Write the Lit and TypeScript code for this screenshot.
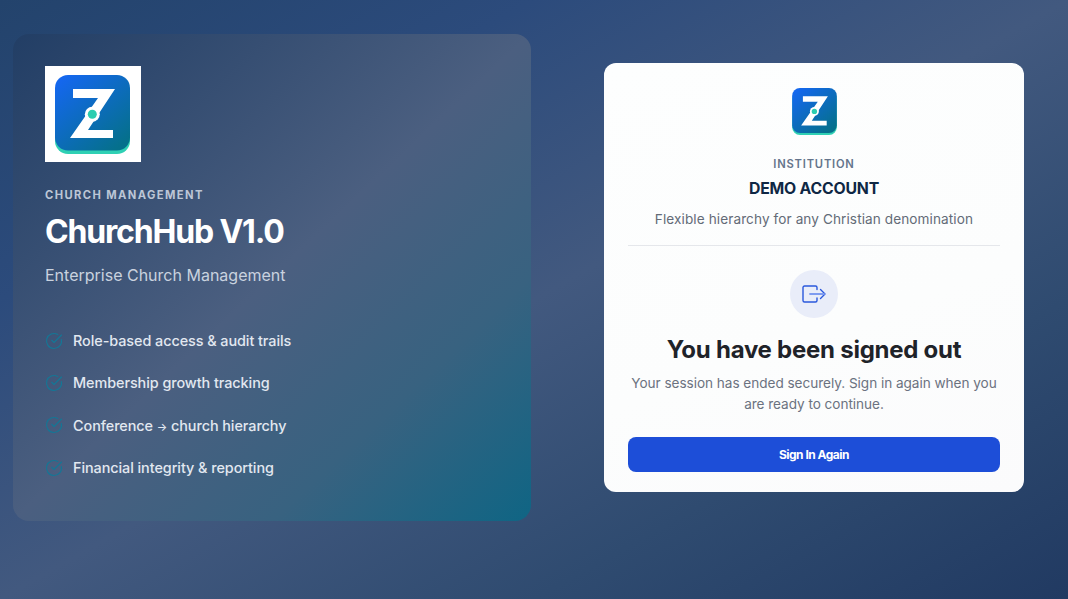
import { LitElement, html, css, svg } from "lit";
import { customElement } from "lit/decorators.js";

let uid = 0;
const logoArt = () => {
  const id = `lg${uid++}`;
  return svg`<defs>
      <linearGradient id=${id} x1="0.1" y1="0.05" x2="0.85" y2="0.95">
        <stop offset="0" stop-color="#1467ee" />
        <stop offset="1" stop-color="#05708c" />
      </linearGradient>
    </defs>
    <rect x="10" y="14" width="75" height="74" rx="13" fill="#2fd0b4" />
    <rect x="10" y="9" width="75" height="75.5" rx="13" fill=${`url(#${id})`} />
    <path d="M28 23H70L43 64H68V72H25L53 32H28Z" fill="#fff" />
    <circle cx="47.3" cy="48.3" r="7.5" fill="#fff" />
    <circle cx="47.3" cy="48.3" r="4.5" fill="#2bcdb0" />`;
};

const check = svg`<path d="M21.8 10A10 10 0 1 1 17 3.34" fill="none" stroke="currentColor" stroke-width="1.5" stroke-linecap="round"/><path d="M9 11l3 3L22 4" fill="none" stroke="currentColor" stroke-width="1.5" stroke-linecap="round" stroke-linejoin="round"/>`;

@customElement("app-root")
export class AppRoot extends LitElement {
  static styles = css`
    :host {
      display: block;
      height: 599px;
      overflow: hidden;
      font-family: "Inter", "Noto Sans", sans-serif;
      background: linear-gradient(to bottom right, #23436c 0%, #2c4b7c 25%, #42597f 50%, #2f4b70 75%, #213a62 100%);
    }
    .page {
      display: flex;
      align-items: flex-start;
      gap: 73px;
      padding: 34px 0 0 13px;
    }
    .panel {
      box-sizing: border-box;
      width: 518px;
      height: 487px;
      padding: 32px;
      border-radius: 16px;
      background: linear-gradient(to bottom right, #223e65 0%, #4b5f80 50%, #386280 75%, #0f6584 100%);
    }
    .logo-big {
      display: block;
      width: 96px;
      height: 96px;
      background: #fff;
    }
    .logo-big svg, .logo-small svg { display: block; filter: blur(0.4px); }
    .eyebrow {
      margin-top: 26px;
      font-size: 11.2px;
      line-height: 14px;
      font-weight: 700;
      letter-spacing: 1.4px;
      color: #bcc6d6;
    }
    h1 {
      margin: 10px 0 0;
      font-size: 32px;
      line-height: 40px;
      font-weight: 700;
      letter-spacing: -1.17px;
      color: #fff;
    }
    .sub {
      margin-top: 12px;
      font-size: 16px;
      line-height: 22px;
      color: #c9d2df;
    }
    ul {
      list-style: none;
      margin: 44px 0 0;
      padding: 0;
      display: flex;
      flex-direction: column;
      gap: 21px;
    }
    li {
      display: flex;
      align-items: center;
      gap: 10px;
      height: 21.3px;
      font-size: 14.4px;
      font-weight: 500;
      letter-spacing: -0.06px;
      color: #e2e8f0;
    }
    li svg {
      width: 18px;
      height: 18px;
      color: #147796;
      flex: none;
    }
    .arrow { font-size: 11px; }
    .card {
      box-sizing: border-box;
      margin-top: 29px;
      width: 420px;
      height: 429px;
      padding: 24px;
      border-radius: 12px;
      background: linear-gradient(160deg, #fdfefe 0%, #fcfdfd 60%, #fbfbfc 100%);
      display: flex;
      flex-direction: column;
      align-items: center;
      text-align: center;
    }
    .card > * { flex: none; }
    .logo-small {
      display: block;
      width: 45px;
      height: 47px;
      margin-top: 1px;
    }
    .inst {
      margin-top: 22px;
      font-size: 11.2px;
      line-height: 14px;
      font-weight: 600;
      letter-spacing: 0.8px;
      color: #64748b;
    }
    .org {
      margin-top: 7px;
      font-size: 15.8px;
      line-height: 22px;
      font-weight: 700;
      letter-spacing: -0.2px;
      color: #0f2744;
    }
    .tag {
      margin-top: 9px;
      font-size: 13.6px;
      line-height: 20px;
      letter-spacing: 0.09px;
      color: #636b77;
    }
    .rule {
      align-self: stretch;
      height: 1px;
      margin-top: 16px;
      background: #e5e7eb;
    }
    .badge {
      margin-top: 24px;
      width: 48px;
      height: 48px;
      border-radius: 50%;
      background: #e9edf9;
      display: flex;
      align-items: center;
      justify-content: center;
    }
    .badge svg { width: 24px; height: 24px; }
    h2 {
      margin: 17px 0 0;
      font-size: 24px;
      line-height: 30px;
      font-weight: 700;
      letter-spacing: -0.25px;
      color: #1f2329;
    }
    .msg {
      margin-top: 7.5px;
      font-size: 13.6px;
      line-height: 21px;
      letter-spacing: -0.04px;
      color: #6b7280;
      max-width: 372px;
    }
    .btn {
      align-self: stretch;
      margin-top: 22.5px;
      height: 35px;
      border: 0;
      border-radius: 8px;
      background: #1d4ed8;
      color: #fff;
      font-family: inherit;
      font-size: 12px;
      font-weight: 700;
      letter-spacing: -0.5px;
    }
  `;

  render() {
    const item = (content: unknown) =>
      html`<li><svg viewBox="0 0 24 24">${check}</svg><span>${content}</span></li>`;
    return html`<div class="page">
      <section class="panel">
        <div class="logo-big"><svg width="96" height="96" viewBox="0 0 96 96" aria-hidden="true">${logoArt()}</svg></div>
        <div class="eyebrow">CHURCH MANAGEMENT</div>
        <h1>ChurchHub V1.0</h1>
        <div class="sub">Enterprise Church Management</div>
        <ul>
          ${item("Role-based access & audit trails")}
          ${item("Membership growth tracking")}
          ${item(html`Conference <span class="arrow">→</span> church hierarchy`)}
          ${item("Financial integrity & reporting")}
        </ul>
      </section>
      <section class="card">
        <div class="logo-small"><svg width="45" height="47" viewBox="10 9 75 79" aria-hidden="true">${logoArt()}</svg></div>
        <div class="inst">INSTITUTION</div>
        <div class="org">DEMO ACCOUNT</div>
        <div class="tag">Flexible hierarchy for any Christian denomination</div>
        <div class="rule"></div>
        <div class="badge">
          <svg viewBox="0 0 24 24" fill="none" stroke-linecap="round" stroke-linejoin="round">
            <path d="M15 7.5V5.5A1.5 1.5 0 0 0 13.5 4H2.5A1.5 1.5 0 0 0 1 5.5v13A1.5 1.5 0 0 0 2.5 20h11a1.5 1.5 0 0 0 1.5-1.5V16" stroke="#2a58dc" stroke-width="1.4"/>
            <path d="M18.5 7.5l4.5 4.5-4.5 4.5" stroke="#2a58dc" stroke-width="1.4"/>
            <path d="M8 12h14" stroke="#7f9cf0" stroke-width="1.8"/>
          </svg>
        </div>
        <h2>You have been signed out</h2>
        <div class="msg">Your session has ended securely. Sign in again when you are ready to continue.</div>
        <button class="btn">Sign In Again</button>
      </section>
    </div>`;
  }
}
